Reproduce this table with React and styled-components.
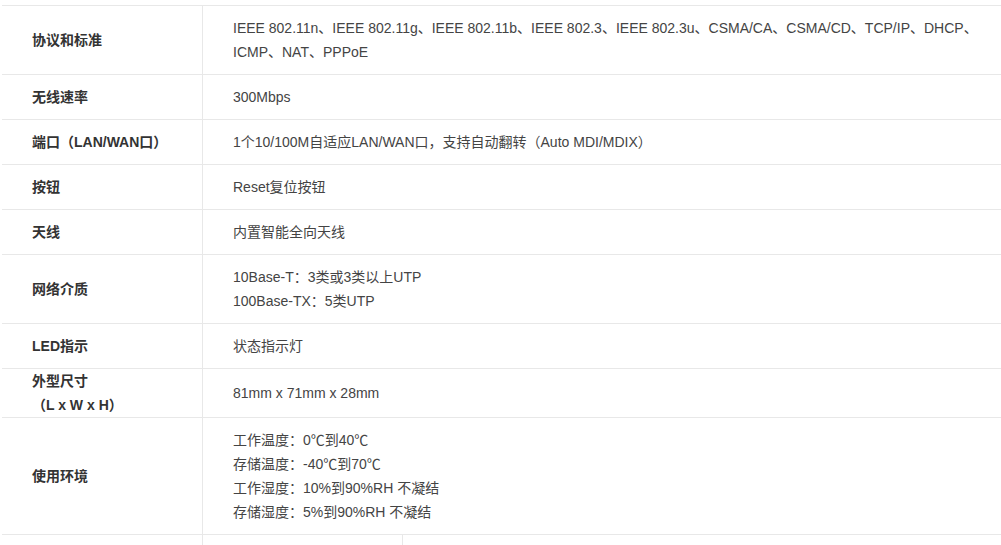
import React from 'react';
import styled, { createGlobalStyle } from "styled-components"

const GlobalStyle = createGlobalStyle`
    html, body{
        margin: 0;
        padding: 0;
        background: #fff;
    }
    body{
        font-family: "Liberation Sans", "Noto Sans CJK SC", sans-serif;
        font-size: 14px;
        color: #333;
        overflow: hidden;
        text-spacing-trim: space-all;
    }
`

const SpecTable = styled.div`
    margin: 5px 0 0 2px;
    width: 1010px;
    border-top: 1px solid #e8e8e8;
`

const Row = styled.div`
    display: grid;
    grid-template-columns: ${props => props.$cols || "200px 1fr"};
    border-bottom: 1px solid #e8e8e8;
`

const Label = styled.div`
    display: flex;
    flex-direction: column;
    justify-content: center;
    padding: 0 10px 0 30px;
    font-weight: bold;
    line-height: 24px;
    color: #333;
`

const Value = styled.div`
    border-left: 1px solid #e8e8e8;
    padding: 10px 30px;
    line-height: 24px;
    color: #444;
    display: flex;
    flex-direction: column;
    justify-content: center;
    span{
        white-space: nowrap;
    }
`

const Blank = styled.div`
    height: 12px;
    border-left: ${props => props.$first ? "none" : "1px solid #e8e8e8"};
`

const specs = [
    {
        label: ["协议和标准"],
        value: [
            "IEEE 802.11n、IEEE 802.11g、IEEE 802.11b、IEEE 802.3、IEEE 802.3u、CSMA/CA、CSMA/CD、TCP/IP、DHCP、",
            "ICMP、NAT、PPPoE"
        ]
    },
    { label: ["无线速率"], value: ["300Mbps"] },
    { label: ["端口（LAN/WAN口）"], value: ["1个10/100M自适应LAN/WAN口，支持自动翻转（Auto MDI/MDIX）"] },
    { label: ["按钮"], value: ["Reset复位按钮"] },
    { label: ["天线"], value: ["内置智能全向天线"] },
    { label: ["网络介质"], value: ["10Base-T：3类或3类以上UTP", "100Base-TX：5类UTP"] },
    { label: ["LED指示"], value: ["状态指示灯"] },
    { label: ["外型尺寸", "（L x W x H）"], value: ["81mm x 71mm x 28mm"] },
    {
        label: ["使用环境"],
        value: [
            "工作温度：0℃到40℃",
            "存储温度：-40℃到70℃",
            "工作湿度：10%到90%RH 不凝结",
            "存储湿度：5%到90%RH 不凝结"
        ]
    },
]

const App = () => {
    return (
        <>
            <GlobalStyle />
            <SpecTable>
                {specs.map((row, i) => (
                    <Row key={i}>
                        <Label>
                            {row.label.map((l, j) => <span key={j}>{l}</span>)}
                        </Label>
                        <Value>
                            {row.value.map((v, j) => <span key={j}>{v}</span>)}
                        </Value>
                    </Row>
                ))}
                <Row $cols="200px 200px 1fr">
                    <Blank $first />
                    <Blank />
                    <Blank />
                </Row>
            </SpecTable>
        </>
    )
};

export default App;
